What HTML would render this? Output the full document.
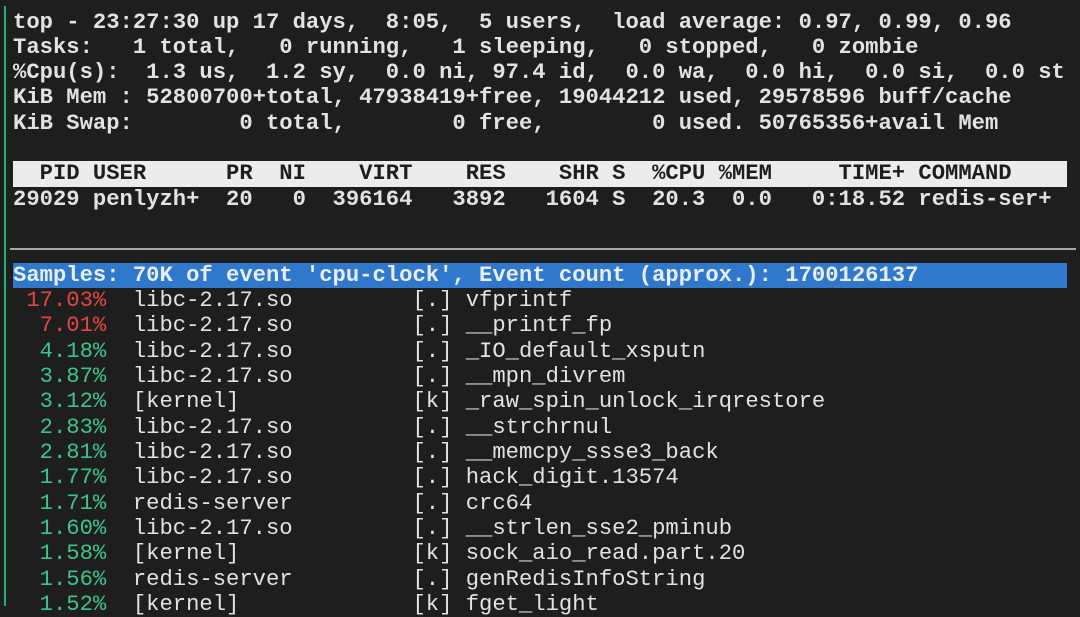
<html><head><style>
body{margin:0;width:1080px;height:600px;background:#1e1e1e;overflow:hidden;position:relative}
.bl{position:absolute;left:4px;top:6px;width:2px;height:600px;background:#22b07a}
pre{position:absolute;left:13px;top:9.5px;margin:0;font-family:"Liberation Mono",monospace;font-size:22.2px;line-height:25.33px;color:#e2e2e2}
.b{font-weight:bold}
.hd{background:#ececec;color:#1e1e1e;display:inline-block;width:1054px}
.sm{background:#2f78cc;color:#e8eef8;display:inline-block;width:1054px;font-weight:bold}
.sep{position:absolute;left:10px;top:248px;width:1066px;height:2px;background:#a8a8a8}
.r{color:#e04646}.g{color:#3cc48a}
</style></head><body>
<div class="bl"></div>
<div class="sep"></div>
<pre><span class="b">top - 23:27:30 up 17 days,  8:05,  5 users,  load average: 0.97, 0.99, 0.96
Tasks:   1 total,   0 running,   1 sleeping,   0 stopped,   0 zombie
%Cpu(s):  1.3 us,  1.2 sy,  0.0 ni, 97.4 id,  0.0 wa,  0.0 hi,  0.0 si,  0.0 st
KiB Mem : 52800700+total, 47938419+free, 19044212 used, 29578596 buff/cache
KiB Swap:        0 total,        0 free,        0 used. 50765356+avail Mem

<span class="hd">  PID USER      PR  NI    VIRT    RES    SHR S  %CPU %MEM     TIME+ COMMAND</span>
29029 penlyzh+  20   0  396164   3892   1604 S  20.3  0.0   0:18.52 redis-ser+</span>


<span class="sm">Samples: 70K of event 'cpu-clock', Event count (approx.): 1700126137</span>
 <span class="r">17.03%</span>  libc-2.17.so         [.] vfprintf
  <span class="r">7.01%</span>  libc-2.17.so         [.] __printf_fp
  <span class="g">4.18%</span>  libc-2.17.so         [.] _IO_default_xsputn
  <span class="g">3.87%</span>  libc-2.17.so         [.] __mpn_divrem
  <span class="g">3.12%</span>  [kernel]             [k] _raw_spin_unlock_irqrestore
  <span class="g">2.83%</span>  libc-2.17.so         [.] __strchrnul
  <span class="g">2.81%</span>  libc-2.17.so         [.] __memcpy_ssse3_back
  <span class="g">1.77%</span>  libc-2.17.so         [.] hack_digit.13574
  <span class="g">1.71%</span>  redis-server         [.] crc64
  <span class="g">1.60%</span>  libc-2.17.so         [.] __strlen_sse2_pminub
  <span class="g">1.58%</span>  [kernel]             [k] sock_aio_read.part.20
  <span class="g">1.56%</span>  redis-server         [.] genRedisInfoString
  <span class="g">1.52%</span>  [kernel]             [k] fget_light</pre>
</body></html>
